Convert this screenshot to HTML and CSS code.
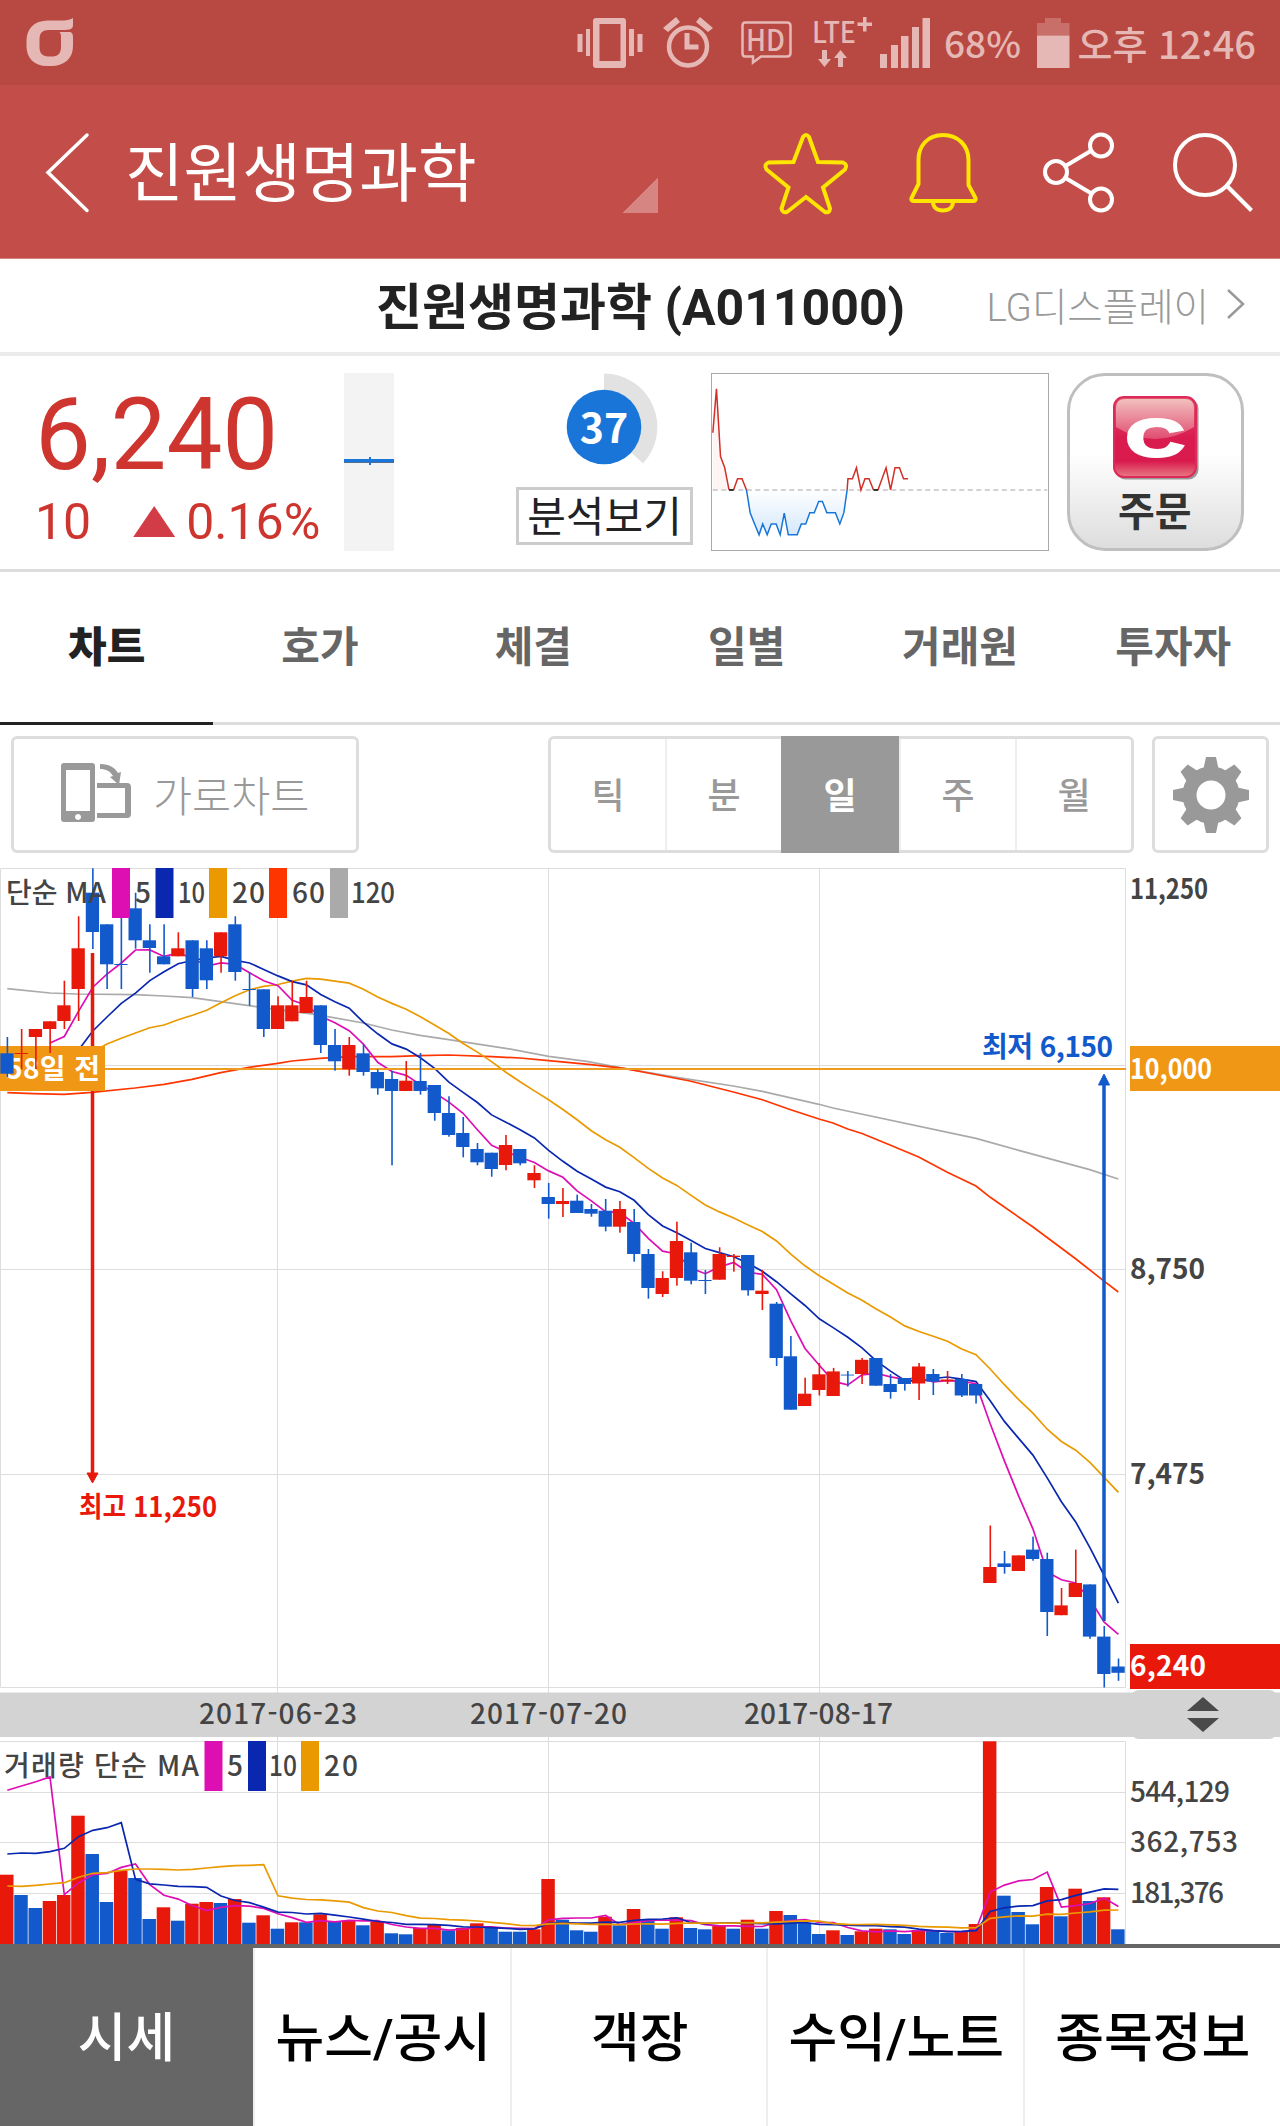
FILE: index.html
```html
<!DOCTYPE html>
<html lang="ko">
<head>
    <meta charset="UTF-8">
    <meta name="viewport" content="width=device-width, initial-scale=1.0">
    <title>진원생명과학</title>
    <link rel="stylesheet" href="styles.css">
</head>
<body>
    <div class="status-bar">
        <svg class="carrier" width="48" height="50" viewBox="26 18 48 50"><path d="M73 19c-3 2-7 2.500-12 2.500H48C34 21.500 26.500 30 26.500 42v5C26.500 59 34 67 47 67h4c14 0 22-8 22-20V38c0-3-1-5-4-5h-9.500c1.500 2 1.500 3 1.500 5v10c0 6-3 9.500-8 9.500h-5c-5.500 0-8.500-3.500-8.500-9.500v-8c0-6 3-9 9-9h14c8 0 10.500-1 10.500-5z"/></svg>
        <div class="status-icons">
            <svg width="66" height="52" viewBox="577 17 66 52">
                <path fill-rule="evenodd" d="M596 18h27q3 0 3 3v44q0 3-3 3h-27q-3 0-3-3V21q0-3 3-3zm3.500 6v37h21V24z"/>
                <path d="M577.500 34h5v18h-5zM586 29h4v27h-4zM629 29h5v27h-5zM637.500 34h5v18h-5z"/>
            </svg>
            <svg class="alarm" width="50" height="52" viewBox="663 17 50 52">
                <ellipse cx="688" cy="46.500" rx="19" ry="19" fill="none" stroke="#e5b8b5" stroke-width="4.500"/>
                <path d="M663 28l13-11 4 5-12 10zM713 28l-13-11-4 5 12 10zM684.500 33h5v11.500h9v5h-14z"/>
            </svg>
            <svg class="hd" width="51" height="44" viewBox="741 21 51 44">
                <path d="M745 22.500h42q3.500 0 3.500 3.500v27q0 3.500-3.500 3.500h-26l-8 6v-6h-8q-2.500 0-2.500-3.500V26q0-3.500 2.500-3.500z" fill="none" stroke="#e5b8b5" stroke-width="2.500"/>
                <text x="746" y="50.500" font-size="30" textLength="39" lengthAdjust="spacingAndGlyphs">HD</text>
            </svg>
            <svg class="lte" width="59" height="52" viewBox="813 17 59 52">
                <text x="812" y="43" font-size="29" font-weight="500" textLength="44" lengthAdjust="spacingAndGlyphs">LTE</text>
                <path d="M863 17h3.500v5.500h5.500v3.500h-5.500v5.500H863V26h-5.500v-3.500h5.500zM822 50h5v9h4l-6.500 8-6.500-8h4zM838 67h5V58h4l-6.500-8-6.500 8h4z"/>
            </svg>
            <svg class="signal" width="51" height="51" viewBox="880 18 51 51"><path d="M880 54h7v14h-7zM891 45h7v23h-7zM901 36h7.500v32H901zM912 27h7v41h-7zM922.500 18h7.500v50h-7.500z"/></svg>
            <span class="percent">68%</span>
            <svg class="battery" width="33" height="51" viewBox="1038 18 33 51"><path opacity=".35" d="M1046 18h16v5h8.500v12.500H1038V23h8z"/><path d="M1038 35.500h32.500V68H1038z"/></svg>
            <span class="clock">오후 12:46</span>
        </div>
    </div>

    <header class="header">
        <svg class="back" width="44" height="82" viewBox="46 132 44 82"><path d="M87 135L48 172.500 87 210.500" fill="none" stroke="#fff" stroke-width="3.500" stroke-linecap="round"/></svg>
        <h1>진원생명과학</h1>
        <span class="corner"></span>
        <nav class="header-icons">
            <svg width="84" height="80" viewBox="763 133 84 80"><path d="M802 137q3-4 6 0l9 25 25 .5q5 2 2 7l-22 18 7 21q-.5 5-5 3.500l-19-15-19 15q-5 1-5.500-3.500l7-21-22-18q-3-5 2-7l25-.5z"/></svg>
            <svg class="bell" width="68" height="80" viewBox="909 133 68 80"><path d="M917.500 184V160c0-14 9-25 24.500-25s25.500 11 25.500 25v25l7 13q1 3-2 3h-60q-3 0-2-3zM932 201.500c0 6 4 9 10 9s10-3 10-9"/></svg>
            <svg class="share" width="70" height="80" viewBox="1043 133 70 80"><circle cx="1055" cy="172" r="11"/><circle cx="1100" cy="145.500" r="11"/><circle cx="1100" cy="199.500" r="11"/><path d="M1064.500 166l26-15.500M1064.500 178l26 15.500"/></svg>
            <svg class="search" width="80" height="80" viewBox="1173 133 80 80"><circle cx="1204" cy="165" r="30"/><path d="M1226 186l24.500 24.500"/></svg>
        </nav>
    </header>

    <div class="stock-name">
        <h2>진원생명과학 (A011000)</h2>
        <a class="next-stock">LG디스플레이
            <svg width="19" height="32" viewBox="0 0 19 32"><path d="M2 2l15 14L2 30" fill="none" stroke="#999" stroke-width="2.500"/></svg>
        </a>
    </div>

    <section class="quote">
        <div class="price">
            <strong>6,240</strong>
            <div class="change"><span>10</span><i class="up"></i><span>0.16%</span></div>
        </div>
        <div class="day-candle"></div>
        <div class="score">
            <svg width="110" height="108" viewBox="-55 -54 110 108">
                <path d="M0 0V-53.500A53.500 53.500 0 0 1 39 36.500z" fill="#e2e2e2"/>
                <circle r="37.300" fill="#1976d8"/>
                <text x="0" y="15.500" text-anchor="middle" font-size="41" font-weight="700" fill="#fff">37</text>
            </svg>
            <a class="analysis">분석보기</a>
        </div>
        <svg class="intraday" width="338" height="178" viewBox="174 40 828 533" preserveAspectRatio="none">
            <defs><linearGradient id="dip" x1="0" y1="0" x2="0" y2="1"><stop offset="0" stop-color="#fff"/><stop offset="1" stop-color="#d5e8fa"/></linearGradient></defs>
            <path fill="#fdf4f3" d="M176 391V218L185 85 195 290 205 322 216 391z"/>
            <path fill="url(#dip)" d="M259 391L268 460 279 494 290 527 299 494 310 527 320 494 332 494 342 527 352 461 362 527 384 527 394 494 405 494 415 460 426 460 437 426 446 426 457 460 478 460 489 494 499 460 507 391z"/>
            <path class="base" d="M176 391H1000"/>
            <polyline stroke="#d03028" points="176,218 185,85 195,290 205,322 216,391"/>
            <polyline stroke="#d03028" points="227,391 237,357 248,357 259,391"/>
            <polyline stroke="#1976d8" points="259,391 268,460 279,494 290,527 299,494 310,527 320,494 332,494 342,527 352,461 362,527 384,527 394,494 405,494 415,460 426,460 437,426 446,426 457,460 478,460 489,494 499,460 507,391"/>
            <polyline stroke="#d03028" points="507,391 509,357 520,357 530,324 541,391 551,357 561,357 572,391"/>
            <polyline stroke="#d03028" points="583,391 593,357 603,324 614,391 625,324 636,324 646,357 657,357"/>
            <path stroke="#000" d="M216 391h11M572 391h11"/>
        </svg>
        <button class="order">
            <svg width="86" height="84" viewBox="0 0 86 84">
                <defs>
                    <linearGradient id="red" x1="0" y1="0" x2="0" y2="1"><stop offset="0" stop-color="#e2586d"/><stop offset=".5" stop-color="#d91c50"/><stop offset=".8" stop-color="#d91a4d"/><stop offset="1" stop-color="#e87a84"/></linearGradient>
                    <linearGradient id="shine" x1="0" y1="0" x2="0" y2="1"><stop offset="0" stop-color="#f2c0bf"/><stop offset="1" stop-color="#e04c70"/></linearGradient>
                </defs>
                <rect x="2.500" y="2.500" width="83" height="81" rx="10" fill="#999"/>
                <rect x="1" y="1" width="82" height="80" rx="10" fill="url(#red)" stroke="#dc2a5a" stroke-width="2"/>
                <path d="M3 31V12q0-9 9-9h60q9 0 9 9v19Q42 55 3 31z" fill="url(#shine)"/>
                <text x="13" y="60" font-family="Liberation Sans" font-size="52" font-weight="700" fill="#fff" stroke="#fff" stroke-width="3" textLength="58" lengthAdjust="spacingAndGlyphs">C</text>
            </svg>
            <span>주문</span>
        </button>
    </section>

    <nav class="tabs">
        <a class="active">차트</a><a>호가</a><a>체결</a><a>일별</a><a>거래원</a><a>투자자</a>
    </nav>

    <div class="toolbar">
        <button class="tool landscape">
            <svg width="74" height="60" viewBox="60 765 74 60" fill="#999">
                <path fill-rule="evenodd" d="M64 765h28q3 0 3 3v53q0 3-3 3H64q-3 0-3-3v-53q0-3 3-3zm2 7v41h24v-41zM78 816a3 3 0 1 0 .1 0z"/>
                <path d="M97 785h30q4 0 4 4v27q0 4-4 4H97v-5h28v-25H97z"/>
                <path d="M100 766c10 0 15 4 18 9l3-1-2 13-9-8 3-1c-3-5-7-7-13-7z"/>
            </svg>
            가로차트
        </button>
        <div class="period">
            <a>틱</a><a>분</a><a class="active">일</a><a>주</a><a>월</a>
        </div>
        <button class="tool gear">
            <svg width="78" height="78" viewBox="-39 -39 78 78" fill="#999">
                <path id="tooth" d="M-8-24L-5-38H5L8-24z"/>
                <use href="#tooth" transform="rotate(45)"/><use href="#tooth" transform="rotate(90)"/><use href="#tooth" transform="rotate(135)"/><use href="#tooth" transform="rotate(180)"/><use href="#tooth" transform="rotate(225)"/><use href="#tooth" transform="rotate(270)"/><use href="#tooth" transform="rotate(315)"/>
                <circle r="21.500" fill="none" stroke="#999" stroke-width="14"/>
            </svg>
        </button>
    </div>

    <svg class="chart" id="priceChart" width="1280" height="824" viewBox="0 868 1280 824">
        <path class="grid" d="M.5 868.500H1125.500V1687.500H.5zM0 1065.500H1125M0 1269.500H1125M0 1474.500H1125M277.500 868V1692M548.500 868V1692M819.500 868V1692"/>
        <g id="priceLines"></g>
        <path d="M105 1069H1126" stroke="#ee9c20" stroke-width="2"/>
        <path d="M92.500 953V1478" stroke="#e8190a" stroke-width="3.500"/>
        <path d="M87 1473h11l-5.500 10z" fill="#e8190a" stroke="#e8190a"/>
        <path d="M1104 1080V1621" stroke="#125acb" stroke-width="3.500"/>
        <path d="M1098.500 1085l5.500-11 5.500 11z" fill="#125acb" stroke="#125acb"/>
        <rect x="0" y="1046" width="105" height="45" fill="#f09715"/>
        <text class="b" x="6" y="1079" fill="#fff" textLength="94">58일 전</text>
        <g id="candles"></g>
        <g id="priceLegend">
            <text x="6" y="903" textLength="100">단순 MA</text>
            <text x="135" y="903">5</text>
            <text x="178" y="903" textLength="27" lengthAdjust="spacingAndGlyphs">10</text>
            <text x="232" y="903" textLength="33">20</text>
            <text x="292" y="903" textLength="33">60</text>
            <text x="351" y="903" textLength="44" lengthAdjust="spacingAndGlyphs">120</text>
            <rect x="112" y="868" width="18" height="50" fill="#dd0fb3"/>
            <rect x="155.500" y="868" width="18" height="50" fill="#0a27b0"/>
            <rect x="209" y="868" width="18" height="50" fill="#ea9a00"/>
            <rect x="269" y="868" width="18" height="50" fill="#ff3500"/>
            <rect x="330" y="868" width="18" height="50" fill="#aaa"/>
        </g>
        <text class="b" x="79" y="1517" fill="#e8190a" textLength="138" lengthAdjust="spacingAndGlyphs">최고 11,250</text>
        <text class="b" x="982" y="1057" fill="#125acb" textLength="131">최저 6,150</text>
        <text class="b" x="1130" y="899" textLength="78" lengthAdjust="spacingAndGlyphs">11,250</text>
        <text class="b" x="1130" y="1279" textLength="75">8,750</text>
        <text class="b" x="1130" y="1484" textLength="75">7,475</text>
        <rect x="1130" y="1046" width="150" height="45" fill="#f09715"/>
        <rect x="1130" y="1644" width="150" height="45" fill="#e8190a"/>
        <text class="b" x="1130" y="1079" fill="#fff" textLength="82" lengthAdjust="spacingAndGlyphs">10,000</text>
        <text class="b" x="1130" y="1676" fill="#fff" textLength="76">6,240</text>
    </svg>

    <svg class="chart" width="1280" height="49" viewBox="0 1692 1280 49">
        <path class="grid" d="M277.500 1692v49M548.500 1692v49M819.500 1692v49"/>
        <path d="M0 1692.500H1280V1737H0z" fill="#d3d3d3"/>
        <rect x="1131" y="1690" width="146" height="49" rx="8" fill="#d3d3d3"/>
        <text x="199" y="1724" textLength="158">2017-06-23</text>
        <text x="470" y="1724" textLength="157">2017-07-20</text>
        <text x="744" y="1724" textLength="149">2017-08-17</text>
        <path d="M1187 1711l16-14 16 14zM1187 1718l16 14 16-14z" fill="#4a4a4a"/>
    </svg>

    <svg class="chart" id="volumeChart" width="1280" height="203" viewBox="0 1741 1280 203">
        <path class="grid" d="M0 1741.500H1125.500V1944M0 1792.500H1125M0 1842.500H1125M0 1893.500H1125M277.500 1741V1944M548.500 1741V1944M819.500 1741V1944"/>
        <text x="4" y="1776" textLength="195">거래량 단순 MA</text>
        <text x="227" y="1776">5</text>
        <text x="269" y="1776" textLength="28" lengthAdjust="spacingAndGlyphs">10</text>
        <text x="324" y="1776" textLength="34">20</text>
        <rect x="204.500" y="1741" width="18" height="50" fill="#dd0fb3"/>
        <rect x="248" y="1741" width="18" height="50" fill="#0a27b0"/>
        <rect x="301" y="1741" width="18" height="50" fill="#ea9a00"/>
        <g id="volumes"></g>
        <text x="1130" y="1802" textLength="100">544,129</text>
        <text x="1130" y="1852" textLength="108">362,753</text>
        <text x="1130" y="1903" textLength="94">181,376</text>
    </svg>

    <nav class="bottom-nav">
        <a class="active">시세</a><a>뉴스/공시</a><a>객장</a><a>수익/노트</a><a>종목정보</a>
    </nav>

    <script src="script.js"></script>
</body>
</html>
```

FILE: styles.css
```css
* { box-sizing: border-box; }
body {
    margin: 0;
    width: 1280px;
    background: #fff;
    font-family: Roboto, "Noto Sans CJK KR", sans-serif;
    color: #222;
}
svg { display: block; flex: none; overflow: visible; }
h1, h2 { margin: 0; }
a, button, span, strong, h1, h2 { white-space: nowrap; }

.status-bar {
    display: flex;
    justify-content: space-between;
    height: 85px;
    padding: 17px 24px 0 26px;
    background: #b84942;
    color: #e5b8b5;
    font-family: "Noto Sans CJK KR", sans-serif;
    font-size: 38px;
    font-weight: 500;
    line-height: 51px;
}
.status-bar svg { fill: #e5b8b5; }
.status-icons { display: flex; align-items: flex-start; width: 679px; }
.alarm { margin-left: 20px; }
.hd { margin: 4px 0 0 28px; }
.lte { margin-left: 21px; }
.signal { margin: 1px 0 0 8px; }
.percent { width: 107px; padding-left: 13px; font-size: 37px; }
.battery { margin-top: 1px; }
.clock { margin-left: 7px; }

.header {
    display: flex;
    height: 174px;
    padding: 0 26px 0 46px;
    background: #c34d48;
    border-bottom: 1px solid #d58480;
}
.back { margin-top: 47px; }
.header h1 {
    width: 532px;
    padding-left: 35px;
    color: #fff;
    font-size: 63.700px;
    font-weight: 400;
    line-height: 179px;
}
.corner {
    width: 36px;
    height: 36px;
    margin-top: 92px;
    background: linear-gradient(to bottom right, transparent 50%, #d68582 50%);
}
.header-icons { display: flex; margin: 48px 0 0 auto; }
.header-icons svg { fill: none; stroke: #ffe600; stroke-width: 4px; }
.header-icons .bell { margin-left: 62px; }
.header-icons .share { margin-left: 66px; stroke: #fff; }
.header-icons .search { margin-left: 60px; stroke: #fff; }

.stock-name {
    display: flex;
    justify-content: space-between;
    height: 97px;
    padding: 0 35px 0 376px;
    border-bottom: 4px solid #ebebeb;
}
.stock-name h2 { font-size: 50px; font-weight: 700; line-height: 99px; }
.next-stock {
    display: flex;
    align-items: center;
    gap: 17px;
    padding-bottom: 3px;
    color: #999;
    font-size: 38.500px;
    font-weight: 300;
}

.quote {
    display: flex;
    height: 216px;
    padding: 17px 36px 0 35px;
    border-bottom: 3px solid #ddd;
}
.price { width: 309px; color: #cd352e; }
.price strong { display: block; font-size: 99.500px; font-weight: 400; line-height: 118px; transform: translateY(3px); }
.change { display: flex; font-size: 50px; line-height: 62px; }
.change .up {
    width: 42px;
    height: 31px;
    margin: 15px 11px 0 42px;
    background: #d23c46;
    clip-path: polygon(50% 0, 100% 100%, 0 100%);
}
.day-candle {
    width: 50px;
    height: 178px;
    background: linear-gradient(#1976d8, #1976d8) 25px 84px / 2px 8px no-repeat,
        linear-gradient(#1976d8 75%, #4f6f95 75%) 0 86px / 50px 4px no-repeat, #f3f3f3;
}
.score { width: 177px; margin-left: 122px; }
.score svg { margin-left: 33px; font-family: "Noto Sans CJK KR", sans-serif; }
.analysis {
    display: block;
    height: 58px;
    margin-top: 6px;
    border: 3px solid #ccc;
    font-size: 42px;
    line-height: 55px;
    text-align: center;
}
.intraday { margin-left: 18px; border: 1px solid #aaa; }
.intraday polyline, .intraday path[stroke] { fill: none; stroke-width: 1.500px; vector-effect: non-scaling-stroke; }
.intraday .base { stroke: #c4c4c4; stroke-width: 1.500px; stroke-dasharray: 5 3.500; vector-effect: non-scaling-stroke; }
.order {
    display: flex;
    flex-direction: column;
    width: 177px;
    height: 178px;
    margin-left: 18px;
    padding: 20px 0 0 43px;
    border: 3px solid #bfbfbf;
    border-radius: 38px;
    background: linear-gradient(#fff 45%, #ddd);
    color: #333;
    font: 700 40px/52px "Noto Sans CJK KR", sans-serif;
    text-align: left;
}
.order span { padding-left: 5px; line-height: 58px; }

.tabs { display: flex; height: 153px; border-bottom: 3px solid #ddd; font-family: "Noto Sans CJK KR", sans-serif; }
.tabs a {
    flex: 1;
    height: 153px;
    color: #666;
    font-size: 42px;
    font-weight: 700;
    line-height: 144px;
    text-align: center;
}
.tabs .active { border-bottom: 3px solid #222; color: #222; font-weight: 900; }

.toolbar { display: flex; height: 143px; padding: 11px 11px 0; }
.tool { height: 117px; padding: 0; border: 3px solid #ddd; border-radius: 6px; background: #fff; }
.landscape {
    display: flex;
    align-items: center;
    gap: 19px;
    width: 348px;
    padding: 0 0 3px 46px;
    color: #999;
    font: 300 42.500px "Noto Sans CJK KR", sans-serif;
}
.period {
    display: flex;
    width: 586px;
    height: 117px;
    margin: 0 18px 0 189px;
    border: 3px solid #ddd;
    border-radius: 6px;
    font-family: "Noto Sans CJK KR", sans-serif;
}
.period a {
    flex: 1;
    border-left: 2px solid #eee;
    color: #999;
    font-size: 36px;
    font-weight: 500;
    line-height: 109px;
    text-align: center;
}
.period a:first-child { border-left: 0; }
.period .active { flex: 0 0 118px; margin: -3px 0; border: 0; background: #999; color: #fff; font-weight: 700; line-height: 115px; }
.gear { width: 117px; padding-left: 17px; }

.chart { font: 500 28px "Noto Sans CJK KR", sans-serif; fill: #444; }
.chart .b { font-weight: 700; }
.chart .grid { fill: none; stroke: #ddd; }
.chart polyline { fill: none; stroke-width: 1.700px; }

.bottom-nav { display: flex; height: 182px; border-top: 4px solid #666; }
.bottom-nav a {
    width: 256.500px;
    padding-left: 2px;
    border-left: 2px solid #eee;
    color: #000;
    font-size: 53px;
    font-weight: 500;
    line-height: 183px;
    text-align: center;
}
.bottom-nav .active { width: 253px; height: 182px; margin-top: -4px; padding: 0; border: 0; background: #666; color: #fff; line-height: 191px; }
```

FILE: script.js
```js
const RED = '#e8190a';
const BLUE = '#125acb';
const STEP = 14.245;
const x = i => 7.3 + i * STEP;

// direction, high, body top, body bottom, low
const candles = [
    ['d', 1037, 1053.3, 1073.7, 1077], ['u', 1029, 1053, 1054, 1069.3], ['u', 1029, 1029, 1037, 1069],
    ['u', 1021.3, 1021.3, 1029, 1053], ['u', 980.7, 1005.3, 1021, 1029], ['u', 916.3, 948.3, 989, 1021],
    ['d', 868.3, 892.7, 932, 949], ['d', 924.3, 924.3, 964.3, 989], ['d', 900, 964, 965, 989],
    ['d', 892.7, 908.3, 940.3, 948.7], ['d', 924.3, 940.3, 948, 972.7], ['d', 924.3, 956.3, 964.3, 964.3],
    ['u', 932.3, 948.3, 956.3, 956.3], ['d', 940.3, 940.3, 989, 997], ['d', 940.3, 948.3, 980.3, 989],
    ['u', 932.3, 932.3, 956.3, 972.7], ['d', 916.3, 924.3, 972, 980.7], ['d', 972.3, 989, 990, 1005.7],
    ['d', 989.3, 989.3, 1029, 1037], ['u', 996.3, 1005.3, 1029, 1029], ['u', 980.7, 1005.3, 1021.3, 1021.3],
    ['u', 980.7, 997, 1013, 1013], ['d', 1005.3, 1005.3, 1045, 1053], ['d', 1029, 1045, 1061.3, 1070.7],
    ['u', 1037, 1045, 1069.3, 1075.7], ['d', 1044.3, 1053.3, 1072, 1075.7], ['d', 1069.3, 1072, 1088.3, 1094.7],
    ['d', 1070.7, 1079, 1091, 1165.3], ['u', 1061, 1080.7, 1091, 1091], ['d', 1053, 1081, 1091, 1094.7],
    ['d', 1085, 1085, 1113, 1120.7], ['d', 1096.3, 1113, 1135, 1136.7], ['d', 1117, 1133, 1147, 1157.3],
    ['d', 1143, 1149, 1162.3, 1165.3], ['d', 1152.7, 1152.7, 1169, 1176.7], ['u', 1135, 1145, 1165, 1170.3],
    ['d', 1149, 1149, 1163.3, 1165.3], ['u', 1165.3, 1173, 1180.3, 1188], ['d', 1183, 1197, 1204, 1218.7],
    ['u', 1188, 1201, 1204, 1217], ['d', 1194.7, 1200.7, 1213, 1213], ['d', 1204, 1209, 1213.7, 1216.7],
    ['d', 1199, 1210.7, 1226.7, 1231.3], ['u', 1201, 1209, 1226.7, 1232.7], ['d', 1209, 1222, 1254, 1261.7],
    ['d', 1249, 1254, 1288, 1298.7], ['u', 1271.3, 1278, 1294, 1297], ['u', 1221.7, 1241, 1278, 1285.7],
    ['d', 1242.7, 1252.3, 1280.7, 1284.3], ['d', 1270, 1280, 1281, 1294], ['u', 1247.3, 1254, 1279.7, 1279.7],
    ['u', 1254, 1255.7, 1257, 1271.7], ['d', 1255, 1255, 1290.3, 1295.7], ['u', 1270, 1290.7, 1294, 1310],
    ['d', 1302, 1303.7, 1358, 1366], ['d', 1336, 1356.3, 1409.7, 1409.7], ['u', 1377.7, 1393.7, 1406, 1406],
    ['u', 1363, 1374.3, 1390, 1395.5], ['u', 1367.9, 1371.4, 1396, 1396], ['d', 1371, 1374.6, 1375.5, 1386.6],
    ['u', 1358, 1359.8, 1374, 1384], ['d', 1358, 1358, 1385.7, 1385.7], ['d', 1374, 1384, 1392, 1398.7],
    ['d', 1378, 1378, 1384, 1390.6], ['u', 1363, 1366.5, 1383.5, 1400], ['d', 1369, 1374, 1381.7, 1395],
    ['u', 1371, 1379.5, 1381.3, 1384], ['d', 1374, 1379, 1395.5, 1397], ['d', 1384, 1384, 1395.5, 1403.6],
    ['u', 1525.5, 1567, 1583, 1583], ['d', 1551, 1563.4, 1567, 1573.7], ['u', 1555.4, 1555.4, 1571, 1571],
    ['d', 1536.6, 1549.6, 1559, 1560.7], ['d', 1552.7, 1559, 1612, 1636], ['u', 1588, 1605.4, 1615.2, 1615.2],
    ['u', 1549.6, 1583, 1597, 1597], ['d', 1584.4, 1584.4, 1636.6, 1638.8], ['d', 1626, 1636.6, 1674, 1687.5],
    ['d', 1658.5, 1666.5, 1672.8, 1680.8]
];

const volumeColors = 'rbbrrrbbrbbrbrrbrbrbrbrbrbrbbrrbrrbbbrrbbbrbrbbrbbrbrbrbbbrbrrbbrbbrrrbbbrbrbrb';
const volumes = [
    69.3, 49, 36, 43, 49, 128.3, 90, 42, 73.7, 66, 25, 36.7, 23.3, 40.3, 42, 41, 45, 21.3, 28.7, 15.3,
    21.7, 21.7, 29.7, 22.3, 23.3, 18.7, 22.7, 10.7, 9.7, 16, 19, 13.7, 16, 20.7, 16.7, 12.3, 12.3, 14.7, 65, 24.3,
    13.7, 12.3, 27.3, 18.7, 35, 23.7, 15.3, 26.7, 16, 14.7, 18, 15.3, 24.3, 15.3, 33, 29, 20.7, 10, 13.7, 9,
    12.7, 15.3, 14.7, 10, 14, 13.7, 11, 12.3, 20, 202.7, 48.3, 32, 19.7, 57, 27.7, 55.3, 43, 46.7, 14.7
];

// moving average, the first values come from days before the visible range
function average(values, days, seed) {
    return values.map((v, i) => {
        if (i < days - 1) return seed[i];
        return values.slice(i - days + 1, i + 1).reduce((a, b) => a + b) / days;
    });
}

function line(color, points) {
    return `<polyline stroke="${color}" points="${points}"/>`;
}

function toPoints(values, y) {
    return values.map((v, i) => v ? `${x(i).toFixed(1)},${y(v).toFixed(1)}` : '').join(' ');
}

const closes = candles.map(c => c[0] === 'u' ? c[2] : c[3]);
const same = v => v;
const ma120 = '7.3,988.7 50,993 76.7,994 135,994.7 164,996 192,997.7 220.7,1001.7 249,1005.7 277.7,1009.7 315,1014.3 363.3,1023 391.7,1030 420,1035.3 448.7,1039.7 505.7,1048.3 548.7,1056.3 586.7,1061.3 624,1068.3 676.7,1077.3 733.3,1086 762.3,1091.3 819,1104.3 833,1108 976,1138.4 1018.7,1150.4 1089.7,1169.6 1118.3,1179';
const ma60 = '7.3,1092.7 33,1093.7 64,1094.3 92,1092.3 135,1088 164,1084.3 192,1079.3 220.7,1072.7 249,1067.3 277.7,1063.3 292,1061 320,1058.3 349,1056.7 391.7,1056.7 420,1055.7 448.7,1055 491.7,1056.7 520,1058 548.7,1060.7 591,1064.7 624,1068.3 648,1073 690,1081 733.3,1092 762.3,1099.7 790.7,1109.7 819,1119 833,1123 847.7,1129 862,1133.5 890,1145 918.7,1157 947.3,1172.3 976,1186 990.3,1197.3 1032.7,1226.8 1075.3,1258.5 1103.7,1280.8 1118.3,1292';

document.getElementById('priceLines').innerHTML =
    line('#aaa', ma120) +
    line('#ff3500', ma60) +
    line('#ea9a00', toPoints(average(closes, 20, [0, 0, 0, 0, 0, 0, 1052, 1044, 1038.3, 1033, 1027.7, 1025, 1019.7, 1015.3, 1010.3, 1002.7, 995.7, 989.7, 986.3]), same)) +
    line('#0a27b0', toPoints(average(closes, 10, [0, 0, 0, 0, 0, 1050, 1031, 1017, 1003.3]), same)) +
    line('#dd0fb3', toPoints(average(closes, 5, [0, 0, 0, 1043]), same));

document.getElementById('candles').innerHTML = candles.map(([dir, high, top, bottom, low], i) => {
    const color = dir === 'u' ? RED : BLUE;
    return `<rect x="${x(i) - 0.7}" y="${high}" width="1.6" height="${low - high}" fill="${color}"/>
        <rect x="${x(i) - 7}" y="${top}" width="13.3" height="${bottom - top}" fill="${color}"/>`;
}).join('');

const bars = volumes.map((h, i) =>
    `<rect x="${x(i) - 7.3}" y="${1944 - h}" width="13.5" height="${h}" fill="${volumeColors[i] === 'r' ? RED : BLUE}"/>`
).join('');
const fromBase = v => 1944 - v;

document.getElementById('volumes').innerHTML = bars +
    line('#dd0fb3', toPoints(average(volumes, 5, [153.7, 158, 162.3, 167]), fromBase)) +
    line('#0a27b0', toPoints(average(volumes, 10, [90, 91, 90.7, 92.3, 95.7, 107.3, 113.7, 116.3, 121.3]), fromBase)) +
    line('#ea9a00', toPoints(average(volumes, 20, [58, 57.7, 58.7, 60, 61.3, 66.7, 70.7, 71.3, 73.7, 75, 75, 74.7, 74, 74.7, 76, 77.3, 78.3, 78.7, 79.3]), fromBase));
```
